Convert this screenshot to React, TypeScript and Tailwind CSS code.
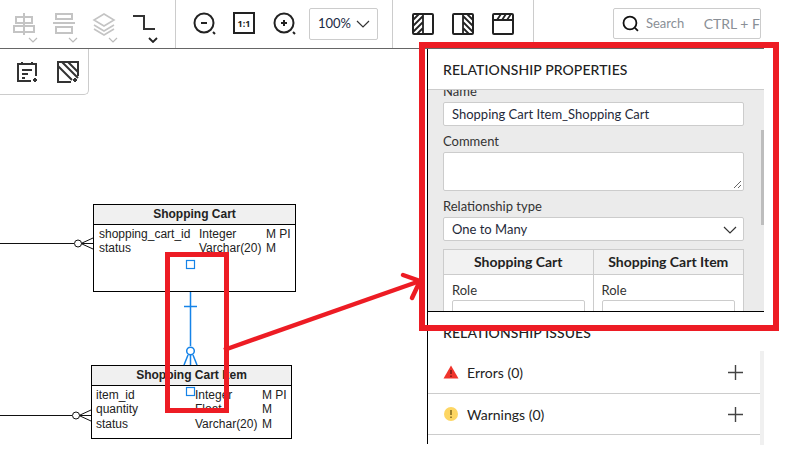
import React from 'react';

const Caret = ({ dark }: { dark?: boolean }) => (
  <svg width="10" height="6" viewBox="0 0 10 6" fill="none" stroke={dark ? '#222' : '#bbb'} strokeWidth={dark ? 1.8 : 1.2} className="absolute bottom-[5px] right-[6px]">
    <path d="M1 1l4 4 4-4" />
  </svg>
);

const ToolIcon = ({ children, caret, dark }: { children: React.ReactNode; caret?: boolean; dark?: boolean }) => (
  <div className="relative flex h-12 w-10 items-center justify-center">
    <svg width="24" height="24" viewBox="0 0 24 24" fill="none" stroke="currentColor" strokeWidth="2">{children}</svg>
    {caret && <Caret dark={dark} />}
  </div>
);

function Toolbar() {
  return (
    <div className="flex h-[49px] w-[764px] border-b border-[#666] bg-white">
      <div className="flex w-[176px] border-r border-[#ccc] pl-1 text-[#c4c4c4]">
        <ToolIcon caret>
          <path d="M12 1v22M4 5h16v6H4zM2 14h20v6H2z" />
        </ToolIcon>
        <ToolIcon caret>
          <path d="M4 2h16v5H4zM1 11h22M4 15h16v6H4z" />
        </ToolIcon>
        <ToolIcon caret>
          <path d="M12 2l10 6-10 6L2 8zM2 13l10 6 10-6M2 17l10 6 10-6" strokeWidth="1.6" />
        </ToolIcon>
        <div className="text-[#333]">
          <ToolIcon caret dark>
            <path d="M1 4h11v13h11" />
          </ToolIcon>
        </div>
      </div>
      <div className="flex w-[217px] items-center border-r border-[#ccc] pl-[9px] text-[#222]">
        <ToolIcon>
          <circle cx="11" cy="11" r="9.500" />
          <path d="M8 11h6M20 20l2 2" />
        </ToolIcon>
        <ToolIcon>
          <rect x="1" y="1" width="20" height="20" />
          <text x="11" y="15" fontSize="9" fontWeight="700" textAnchor="middle" fill="#222" stroke="none" fontFamily="Noto Sans">1:1</text>
        </ToolIcon>
        <ToolIcon>
          <circle cx="11" cy="11" r="9.500" />
          <path d="M8 11h6M11 8v6M20 20l2 2" />
        </ToolIcon>
        <div className="ml-1 flex h-8 w-[69px] items-center justify-between rounded-[2px] border border-[#ccc] pl-2 pr-[7px] text-[13px] text-[#1a2a44]">
          <span>100%</span>
          <svg width="14" height="8" viewBox="0 0 14 8" fill="none" stroke="#333" strokeWidth="1.2"><path d="M1 1l6 6 6-6" /></svg>
        </div>
      </div>
      <div className="flex w-[141px] items-center border-r border-[#ccc] pl-[10px] text-[#222]">
        <ToolIcon>
          <rect x="2" y="2" width="20" height="20" rx="1" />
          <path d="M12 2v20M2 8l6-6M2 14l10-10M2 20l10-10M6 22l6-6" strokeWidth="1.8" />
        </ToolIcon>
        <ToolIcon>
          <rect x="2" y="2" width="20" height="20" rx="1" />
          <path d="M12 2v20M12 4l10 10M12 10l10 10M12 16l6 6M16 2l6 6" strokeWidth="1.8" />
        </ToolIcon>
        <ToolIcon>
          <rect x="2" y="2" width="20" height="20" rx="1" />
          <path d="M2 8h20M6 8l4-6M11 8l4-6M16 8l4-6" strokeWidth="1.8" />
        </ToolIcon>
      </div>
      <div className="mt-2 ml-auto mr-[3px] flex h-[31px] w-[148px] items-center whitespace-nowrap rounded-[2px] border border-[#ccc] pl-2 text-[14px] text-[#8a8f96]">
        <svg width="18" height="18" viewBox="0 0 18 18" fill="none" stroke="#111" strokeWidth="1.8"><circle cx="8" cy="8" r="6.500" /><path d="M13 13l3 3" /></svg>
        <span className="ml-[6px] w-[58px] text-[13px]">Search</span>
        <span>CTRL + F</span>
      </div>
    </div>
  );
}

const Field = ({ children }: { children?: React.ReactNode }) => (
  <div className="flex h-6 items-center rounded-[2px] border border-[#ccc] bg-white px-2 pt-[1px] text-[#1f2a3a]">{children}</div>
);

function Properties() {
  return (
    <div className="h-[263px] border-b border-black">
      <div className="flex h-10 items-center pl-[15px] text-[14px] font-medium tracking-[0.1px] text-[#222]">RELATIONSHIP PROPERTIES</div>
      <div className="relative h-[222px] overflow-hidden border-t border-[#ccc] bg-[#ebebeb] pl-[15px] pr-5 text-[13px]">
        <div className="-mt-[7px] h-[19px] leading-[17px] text-[#333]">Name</div>
        <Field>Shopping Cart Item_Shopping Cart</Field>
        <div className="mt-[5px] h-[21px] leading-5 text-[#333]">Comment</div>
        <div className="relative h-[39px] rounded-[2px] border border-[#ccc] bg-white">
          <svg width="9" height="9" viewBox="0 0 9 9" stroke="#666" className="absolute bottom-[1px] right-[1px]"><path d="M1 8l7-7M5 8l3-3" /></svg>
        </div>
        <div className="mt-[5px] h-[21px] leading-[21px] text-[#333]">Relationship type</div>
        <div className="flex h-6 items-center justify-between rounded-[2px] border border-[#ccc] bg-white pl-2 pr-[6px] pt-[1px] text-[#1f2a3a]">
          <span>One to Many</span>
          <svg width="14" height="8" viewBox="0 0 14 8" fill="none" stroke="#333" strokeWidth="1.2"><path d="M1 1l6 6 6-6" /></svg>
        </div>
        <div className="mt-2 grid w-[301px] grid-cols-2 border border-[#ccc] bg-white">
          {['Shopping Cart', 'Shopping Cart Item'].map((name, i) => (
            <div key={name} className={i === 0 ? 'border-r border-[#ccc]' : ''}>
              <div className="flex h-[25px] items-center justify-center border-b border-[#ccc] bg-[#f2f2f2] pb-[1px] text-[14px] font-bold text-[#222]">{name}</div>
              <div className="px-2 pt-[5px]">
                <div className="h-5 leading-5 text-[#333]">Role</div>
                <div className="h-6 rounded-[2px] border border-[#ccc] bg-white" />
              </div>
            </div>
          ))}
        </div>
        <div className="absolute right-0 top-10 h-[95px] w-[3px] bg-[#bdbdbd]" />
      </div>
    </div>
  );
}

const IssueRow = ({ icon, label, height }: { icon: React.ReactNode; label: string; height: string }) => (
  <div className={`flex ${height} items-center justify-between border-b border-[#ccc] pl-[15px] pr-[17px] text-[14px] text-[#222]`}>
    <div className="flex items-center gap-2">{icon}<span>{label}</span></div>
    <svg width="15" height="15" viewBox="0 0 15 15" stroke="#444" strokeWidth="1.4"><path d="M7.500 0v15M0 7.500h15" /></svg>
  </div>
);

function Issues() {
  return (
    <div>
      <div className="flex h-[39px] items-center pl-[15px] pt-[1px] text-[14px] font-medium tracking-[0.1px] text-[#222]">RELATIONSHIP ISSUES</div>
      <div className="border-r-4 border-[#f0f0f0]">
        <IssueRow
          label="Errors (0)"
          height="h-[43px]"
          icon={
            <svg width="16" height="14" viewBox="0 0 16 14"><path d="M8 .5L15.500 13.500H.5z" fill="#f0342c" /><path d="M8 5v4M8 10.500v1.500" stroke="#5c1410" strokeWidth="1.200" /></svg>
          }
        />
        <IssueRow
          label="Warnings (0)"
          height="h-[41px]"
          icon={
            <svg width="16" height="16" viewBox="0 0 16 16"><circle cx="8" cy="8" r="7" fill="#fdd663" /><path d="M8 4v5M8 10.500v1.500" stroke="#6b5410" strokeWidth="1.300" /></svg>
          }
        />
        <div className="h-[10px]" />
      </div>
    </div>
  );
}

const Row = ({ name, type, flags, left }: { name: string; type: string; flags: string; left: string }) => (
  <div className="flex h-[14px] leading-[14px]">
    <span className={left}>{name}</span>
    <span className="w-[67px]">{type}</span>
    <span>{flags}</span>
  </div>
);

function EntityCart() {
  return (
    <div className="absolute left-[93px] top-[155px] h-[88px] w-[203px] border border-black bg-white font-['Liberation_Sans',sans-serif] text-[12px] text-[#222]">
      <div className="flex h-5 items-center justify-center border-b border-black bg-[#f0f0f0] pb-[2px] font-bold">Shopping Cart</div>
      <div className="pl-[5px] pt-[2px]">
        <Row name="shopping_cart_id" type="Integer" flags="M PI" left="w-[100px]" />
        <Row name="status" type="Varchar(20)" flags="M" left="w-[100px]" />
      </div>
    </div>
  );
}

function EntityItem() {
  return (
    <div className="absolute left-[91px] top-[316px] h-[74px] w-[201px] border border-black bg-white font-['Liberation_Sans',sans-serif] text-[12px] text-[#222]">
      <div className="flex h-5 items-center justify-center border-b border-black bg-[#f0f0f0] pb-[2px] font-bold">Shopping Cart Item</div>
      <div className="pl-[4px] pt-[2px]">
        <Row name="item_id" type="Integer" flags="M PI" left="w-[99px]" />
        <Row name="quantity" type="Float" flags="M" left="w-[99px]" />
        <div className="mt-[1px]">
          <Row name="status" type="Varchar(20)" flags="M" left="w-[99px]" />
        </div>
      </div>
    </div>
  );
}

function Canvas() {
  return (
    <div className="relative h-[395px] w-[428px] border-r border-black">
      <div className="flex h-[46px] w-[89px] items-center gap-[18px] rounded-br-[5px] border-b border-r border-[#ccc] pl-[17px] text-[#333]">
        <svg width="22" height="22" viewBox="0 0 22 22" fill="none" stroke="currentColor" strokeWidth="2">
          <path d="M14 20H1V3h18v12M5 1v3M15 1v3M5 9h10M5 13h6M5 17h3M18 17v4M16 19h4" />
        </svg>
        <svg width="22" height="22" viewBox="0 0 22 22" fill="none" stroke="currentColor" strokeWidth="2">
          <path d="M14 21H1V1h20v14M1 5l14 14M5 1l16 16M11 1l10 10M18 17v4M16 19h4" />
        </svg>
      </div>

      <EntityCart />
      <EntityItem />

      {/* connector lines, y is relative to the canvas (top 49) */}
      <svg width="427" height="395" viewBox="0 49 427 395" fill="none" className="pointer-events-none absolute inset-0">
        <g stroke="#111" strokeWidth="1">
          <path d="M0 243.500h74M81 243.500l12-5.500M81 243.500h12M81 243.500l12 5.500" />
          <circle cx="78" cy="243.500" r="3.500" fill="#fff" />
          <path d="M0 415.500h72M79 415.500l12-5.500M79 415.500h12M79 415.500l12 5.500" />
          <circle cx="76" cy="415.500" r="3.500" fill="#fff" />
        </g>
        <g stroke="#1583e8" strokeWidth="1.500">
          <rect x="186.500" y="260.500" width="8" height="8" fill="#fff" strokeWidth="1.200" />
          <path d="M190.500 292v54M184 306.500h13M190.500 355v10M188 355l-4 10M193 355l4 10" />
          <circle cx="190.500" cy="351" r="3.800" fill="#fff" />
          <rect x="186.500" y="387.500" width="8" height="8" fill="#fff" strokeWidth="1.200" />
        </g>
      </svg>
    </div>
  );
}

export default function App() {
  return (
    <div className="relative h-[450px] w-[810px] overflow-hidden bg-white font-['Lato',sans-serif]">
      <Toolbar />
      <div className="flex">
        <Canvas />
        <div className="w-[336px]">
          <Properties />
          <Issues />
        </div>
      </div>

      {/* red annotation drawn over the screenshot */}
      <div className="absolute left-[165px] top-[252px] h-[161px] w-[64px] border-[5px] border-[#ed1c24]" />
      <div className="absolute left-[419px] top-[42px] h-[289px] w-[360px] border-[6px] border-[#ed1c24]" />
      <svg width="810" height="450" className="pointer-events-none absolute left-0 top-0">
        <path d="M224 350L420 281" stroke="#ed1c24" strokeWidth="4.500" />
        <path d="M403 275L420 281L412 298" stroke="#ed1c24" strokeWidth="4.500" fill="none" strokeLinecap="round" />
      </svg>
    </div>
  );
}
